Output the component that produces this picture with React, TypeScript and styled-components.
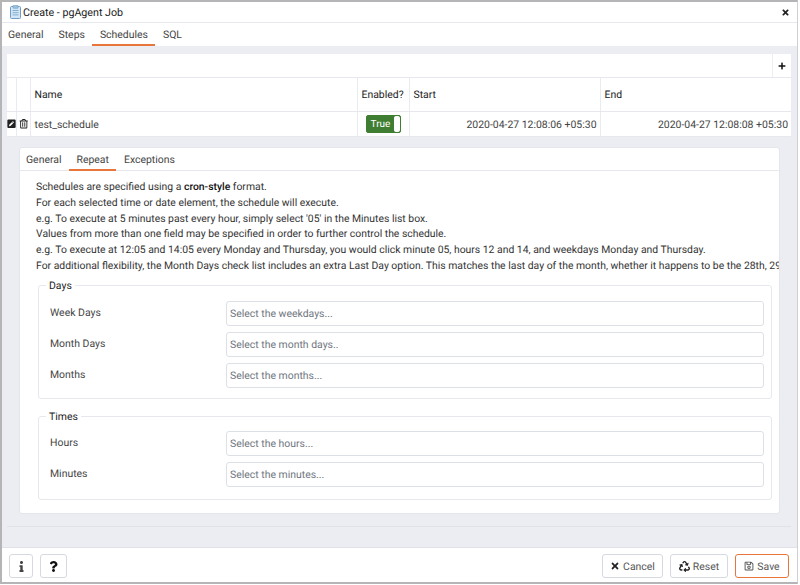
import React from "react";
import styled, { createGlobalStyle } from "styled-components";
import { FaInfo, FaPenSquare, FaPlus, FaQuestion, FaRecycle, FaRegSave, FaRegTrashAlt, FaTimes } from "react-icons/fa";

const Global = createGlobalStyle`
  html, body { margin: 0; padding: 0; background: #fff; }
  * { box-sizing: border-box; }
  body { font-family: Roboto, "Liberation Sans", sans-serif; color: #222; width: 800px; height: 585px; overflow: hidden; text-rendering: geometricPrecision; }
`;

const Dialog = styled.div`
  width: 798px; height: 584px; border-top: 2px solid #b5b5b8; border-left: 2px solid #b5b5b8; border-bottom: 2px solid #b5b5b8;
  border-right: 1px solid #d0d0d4; display: flex; flex-direction: column; background: #fff; overflow: hidden;
`;
const TitleBar = styled.div`
  height: 21px; flex: none; display: flex; align-items: center; justify-content: space-between; padding: 0 7px 0 8px;
  border-bottom: 1px solid #e6e8ee; font-size: 10.7px; color: #222;
`;
const TitleGroup = styled.div`display: flex; align-items: center; gap: 2px;`;
const CloseMark = styled.span`display: flex; font-size: 9px; color: #222;`;
const TabBar = styled.div`
  flex: none; display: flex; height: 23px; margin-left: -1.5px; padding-top: 1px;
`;
const InnerTabBar = styled.div`
  flex: none; display: flex; height: 23px; padding-left: 0; border-bottom: 1px solid #e6e8ee;
`;
const InnerTabs = styled.div`display: flex; margin-left: -1.5px; height: 23px; padding-top: 2px;`;
const Tab = styled.div<{ $active?: boolean }>`
  padding: 0 7.5px; display: flex; align-items: center; font-size: 10.45px; color: #444;
  border-bottom: 2px solid ${p => (p.$active ? "#e8763b" : "transparent")};
`;
const Body = styled.div`
  flex: 1; background: #ebedf2; padding: 8px 0 0 5px; display: flex; flex-direction: column; min-height: 0;
`;
const Panel = styled.div`
  height: 473px; flex: none; border-bottom: 1px solid #e0e2e8; display: flex; flex-direction: column; width: 784px;
`;
const TableToolbar = styled.div`
  height: 24px; flex: none; background: #fff; display: flex; justify-content: flex-end; border-bottom: 1px solid #e6e8ee;
`;
const AddButton = styled.div`
  width: 19px; display: flex; align-items: center; justify-content: center; font-size: 8px; color: #111; border-left: 1px solid #eceef2;
`;
const Row = styled.div<{ $h: number }>`
  display: grid; grid-template-columns: 10px 14px 327px 52px 191px 1fr; height: ${p => p.$h}px; flex: none; background: #fff;
  border-bottom: 1px solid #e6e8ee;
`;
const Cell = styled.div<{ $align?: string; $head?: boolean }>`
  display: flex; align-items: center; justify-content: ${p => p.$align || "flex-start"};
  padding: 0 3.5px; font-size: 10.45px; color: ${p => (p.$head ? "#222" : "#444")};
  border-right: 1px solid #e9ebf0; white-space: nowrap; overflow: hidden;
`;
const IconCell = styled(Cell)`padding: 0; font-size: 9.5px; color: #222; justify-content: center;`;
const ToggleCell = styled(Cell)`padding: 0 0 0 8px;`;
const HeadLast = styled(Cell)`border-right: 0;`;
const EndCell = styled(Cell)`border-right: 0; padding-right: 3px;`;
const Toggle = styled.div`
  width: 35px; height: 18px; border-radius: 2px; background: #3f7d32; border: 1px solid #3f7d32; display: flex; overflow: hidden; color: #fff; font-size: 10px;
`;
const ToggleLabel = styled.span`flex: 1; display: flex; align-items: center; justify-content: center;`;
const ToggleKnob = styled.span`width: 6px; background: #fff; border-radius: 2px;`;

const SubPanel = styled.div`
  margin: 10px 11px 0 12px; height: 367px; flex: none; background: #fff; border: 1px solid #e4e6ec; border-radius: 3px; display: flex; flex-direction: column; overflow: hidden;
`;
const Help = styled.div`
  padding: 8px 0 0 16px; font-size: 10.4px; line-height: 15.8px; color: #333; white-space: nowrap; overflow: hidden; flex: none;
`;
const HelpLine = styled.div``;
const Strong = styled.span`color: #111; font-weight: 500;`;
const Group = styled.fieldset<{ $h: number; $top: number; $pad: number }>`
  margin: ${p => p.$top}px 7px 0 18px; padding: ${p => p.$pad}px 7px 0 11px; border: 1px solid #e6e8ee; border-radius: 3px; height: ${p => p.$h}px; min-width: 0; flex: none;
  display: flex; flex-direction: column; gap: 6px;
`;
const Legend = styled.legend`padding: 0 3px; margin-left: -4px; font-size: 10.45px; color: #222; line-height: 12px;`;
const Field = styled.div`display: grid; grid-template-columns: 176px 1fr; height: 25px;`;
const FieldLabel = styled.div`font-size: 10.45px; color: #444; padding-top: 5px;`;
const SelectBox = styled.div`
  border: 1px solid #dde0e6; border-radius: 3px; display: flex; align-items: center; padding: 0 3px; font-size: 10.45px; color: #6f7680;
`;
const Footer = styled.div`
  height: 35px; flex: none; border-top: 1px solid #e0e2e8; display: flex; justify-content: space-between; align-items: center; padding: 2px 8px 0 7px;
`;
const BtnGroup = styled.div`display: flex; gap: 7px; align-items: center;`;
const Btn = styled.div<{ $w: number; $primary?: boolean }>`
  width: ${p => p.$w}px; height: 24px; border-radius: 3px; border: 1px solid ${p => (p.$primary ? "#e8763b" : "#d6d9e0")};
  display: flex; align-items: center; justify-content: center; gap: 3px; font-size: 10.45px; color: #555; background: #fff;
`;
const Glyph = styled.span<{ $c?: string; $s?: number }>`display: flex; color: ${p => p.$c || "#222"}; font-size: ${p => p.$s || 9}px;`;

const Clipboard = () => (
  <svg width="11" height="14" viewBox="0 0 11 14">
    <rect x="0.5" y="1.5" width="10" height="12" rx="1" fill="#d4e6f5" stroke="#6e9fc6" />
    <rect x="3" y="0.3" width="5" height="3" rx="0.5" fill="#9dc0dc" stroke="#6e9fc6" strokeWidth="0.6" />
    <path d="M2.5 5.5h6M2.5 7.7h6M2.5 9.9h6" stroke="#6e9fc6" strokeWidth="0.8" />
  </svg>
);

const helpTail = "For additional flexibility, the Month Days check list includes an extra Last Day option. This matches the last day of the month, whether it happens to be the 28th, 29th, 30th or 31st.";

const daysFields = [
  ["Week Days", "Select the weekdays..."],
  ["Month Days", "Select the month days.."],
  ["Months", "Select the months..."],
];
const timeFields = [
  ["Hours", "Select the hours..."],
  ["Minutes", "Select the minutes..."],
];

export default function App() {
  return (
    <Dialog>
      <Global />
      <TitleBar>
        <TitleGroup><Clipboard />Create - pgAgent Job</TitleGroup>
        <CloseMark><FaTimes /></CloseMark>
      </TitleBar>
      <TabBar>
        <Tab>General</Tab>
        <Tab>Steps</Tab>
        <Tab $active>Schedules</Tab>
        <Tab>SQL</Tab>
      </TabBar>
      <Body>
        <Panel>
          <TableToolbar><AddButton><FaPlus /></AddButton></TableToolbar>
          <Row $h={34}>
            <Cell $head /><Cell $head />
            <Cell $head>Name</Cell>
            <Cell $head>Enabled?</Cell>
            <Cell $head>Start</Cell>
            <HeadLast $head>End</HeadLast>
          </Row>
          <Row $h={25}>
            <IconCell><FaPenSquare /></IconCell>
            <IconCell><FaRegTrashAlt /></IconCell>
            <Cell>test_schedule</Cell>
            <ToggleCell>
              <Toggle><ToggleLabel>True</ToggleLabel><ToggleKnob /></Toggle>
            </ToggleCell>
            <Cell $align="flex-end">2020-04-27 12:08:06 +05:30</Cell>
            <EndCell $align="flex-end">2020-04-27 12:08:08 +05:30</EndCell>
          </Row>
          <SubPanel>
            <InnerTabBar>
              <InnerTabs>
                <Tab>General</Tab>
                <Tab $active>Repeat</Tab>
                <Tab>Exceptions</Tab>
              </InnerTabs>
            </InnerTabBar>
            <Help>
              <HelpLine>Schedules are specified using a <Strong>cron-style</Strong> format.</HelpLine>
              <HelpLine>For each selected time or date element, the schedule will execute.</HelpLine>
              <HelpLine>e.g. To execute at 5 minutes past every hour, simply select '05' in the Minutes list box.</HelpLine>
              <HelpLine>Values from more than one field may be specified in order to further control the schedule.</HelpLine>
              <HelpLine>e.g. To execute at 12:05 and 14:05 every Monday and Thursday, you would click minute 05, hours 12 and 14, and weekdays Monday and Thursday.</HelpLine>
              <HelpLine>{helpTail}</HelpLine>
            </Help>
            <Group $h={119} $top={6} $pad={9}>
              <Legend>Days</Legend>
              {daysFields.map(([l, p]) => (
                <Field key={l}><FieldLabel>{l}</FieldLabel><SelectBox>{p}</SelectBox></Field>
              ))}
            </Group>
            <Group $h={89} $top={12} $pad={8}>
              <Legend>Times</Legend>
              {timeFields.map(([l, p]) => (
                <Field key={l}><FieldLabel>{l}</FieldLabel><SelectBox>{p}</SelectBox></Field>
              ))}
            </Group>
          </SubPanel>
        </Panel>
      </Body>
      <Footer>
        <BtnGroup>
          <Btn $w={24}><Glyph $c="#444" $s={11}><FaInfo /></Glyph></Btn>
          <Btn $w={27}><Glyph $c="#111" $s={11}><FaQuestion /></Glyph></Btn>
        </BtnGroup>
        <BtnGroup>
          <Btn $w={61}><Glyph $s={10}><FaTimes /></Glyph>Cancel</Btn>
          <Btn $w={58}><Glyph $s={11}><FaRecycle /></Glyph>Reset</Btn>
          <Btn $w={54} $primary><Glyph $c="#555" $s={10}><FaRegSave /></Glyph>Save</Btn>
        </BtnGroup>
      </Footer>
    </Dialog>
  );
}
